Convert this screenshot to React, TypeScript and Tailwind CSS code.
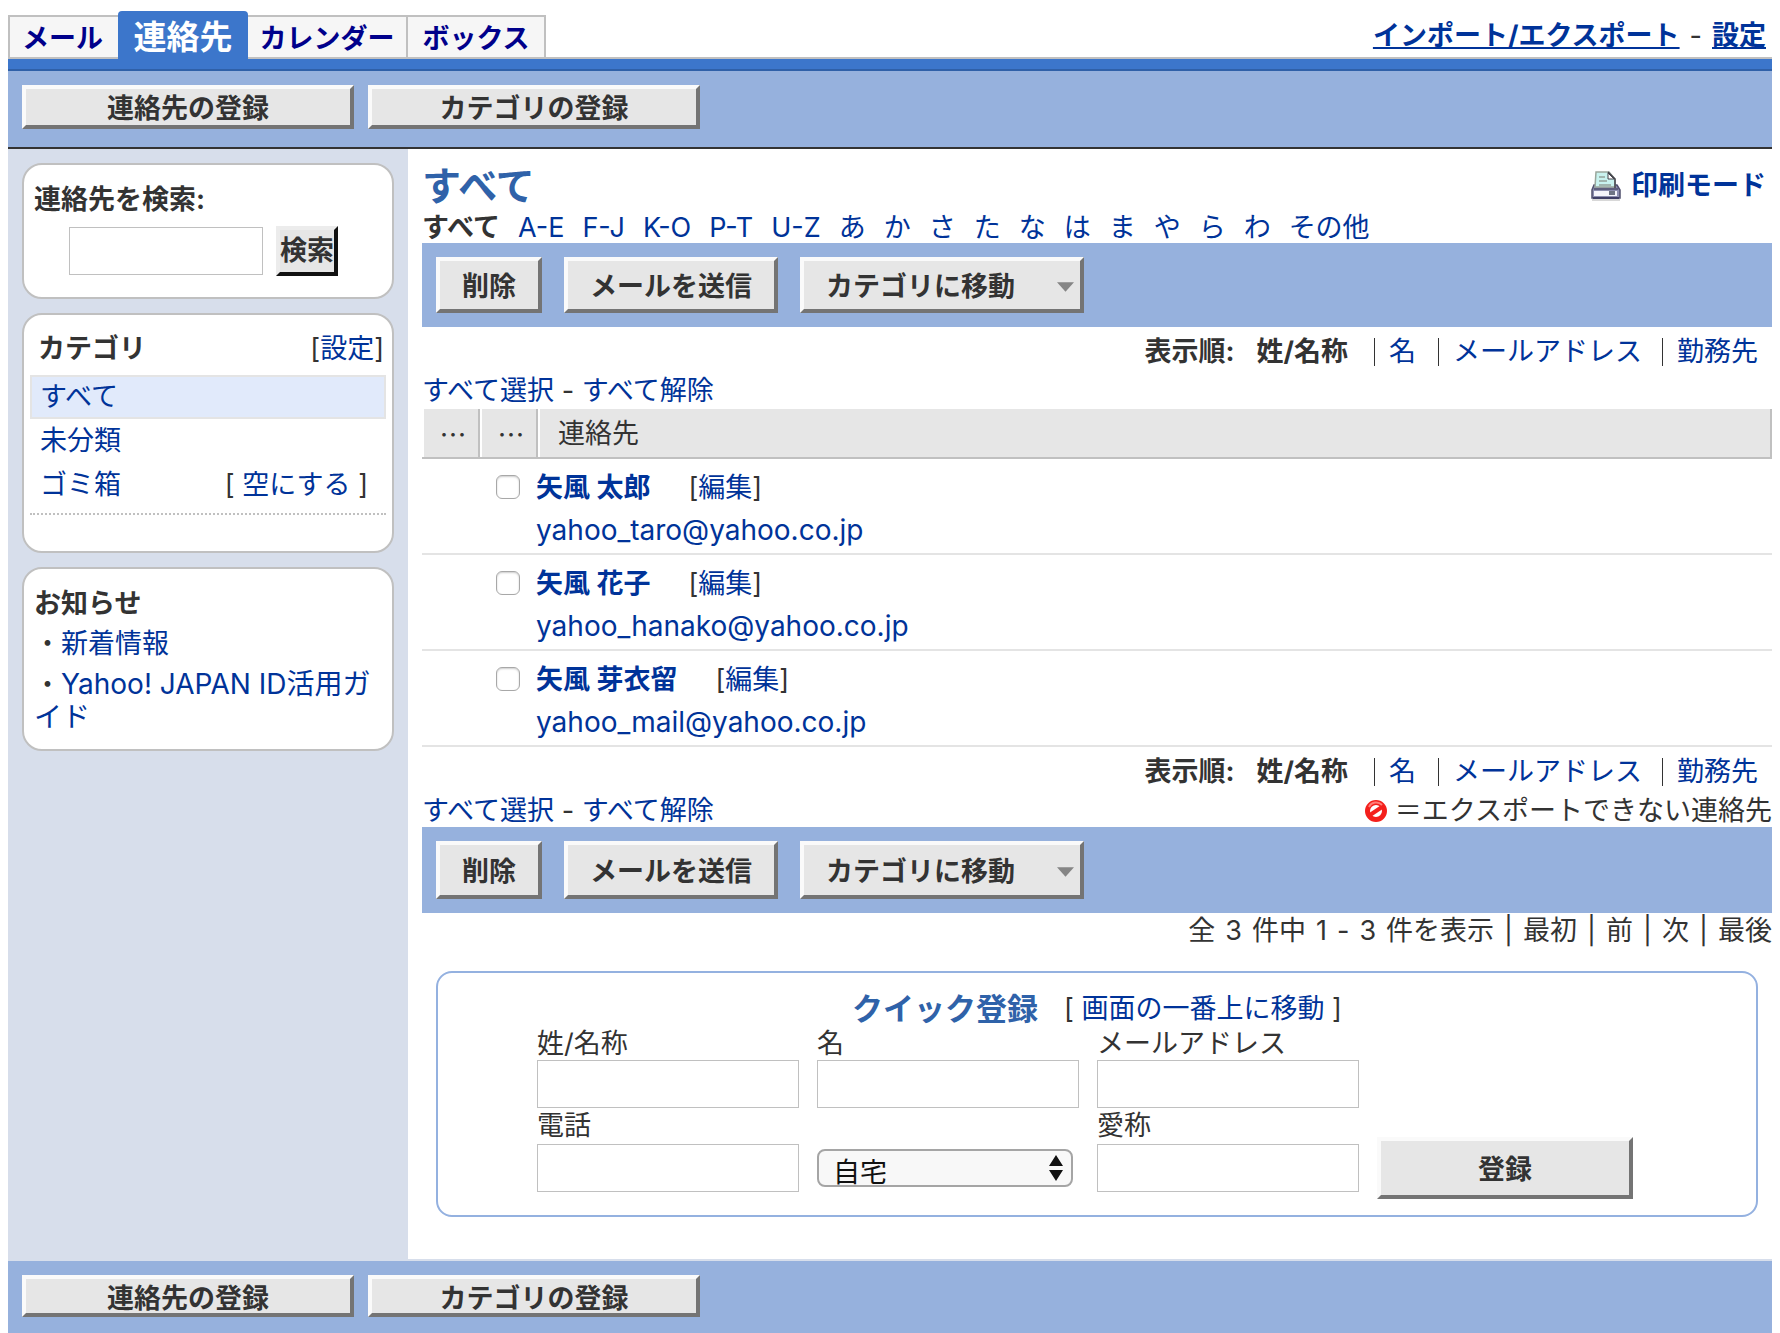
import clsx from 'clsx'

const RAISED =
    'border-4 border-t-[#fafafa] border-l-[#fafafa] border-r-[#747474] border-b-[#747474] bg-[#e6e6e6] pt-1 font-bold text-[#333] whitespace-nowrap'

const FIELD = 'h-12 border border-[#c0c0c0] bg-white px-2'

const LINK = 'text-[#003399]'

const indexLinks = ['A-E', 'F-J', 'K-O', 'P-T', 'U-Z', 'あ', 'か', 'さ', 'た', 'な', 'は', 'ま', 'や', 'ら', 'わ', 'その他']

const pager = ['全', '3', '件中', '1', '-', '3', '件を表示', '|', '最初', '|', '前', '|', '次', '|', '最後']

const contacts = [
    { name: '矢風 太郎', email: 'yahoo_taro@yahoo.co.jp' },
    { name: '矢風 花子', email: 'yahoo_hanako@yahoo.co.jp' },
    { name: '矢風 芽衣留', email: 'yahoo_mail@yahoo.co.jp' },
]

function PrinterIcon() {
    return (
        <svg width="30" height="30" viewBox="0 0 30 30" aria-hidden="true">
            <path d="M1 29h28" stroke="#d8d8d8" strokeWidth="2" />
            <path d="M3 14h23l3 5v8H1v-8z" fill="#8d8fb0" stroke="#50506e" strokeWidth="1.5" />
            <path d="M5 1h13l6 7v8H4z" fill="#c9f3ef" stroke="#9aa79c" strokeWidth="1.5" />
            <path d="M17 1l7 7v9" fill="none" stroke="#44444c" strokeWidth="1.5" />
            <path d="M17 2v6h6z" fill="#fff" stroke="#44444c" strokeWidth="1" />
            <path d="M8 6h6M8 10h8M8 14h12" stroke="#93a39a" strokeWidth="1.5" />
            <path d="M3 18h24" stroke="#50506e" strokeWidth="1.5" />
            <rect x="3" y="20" width="23" height="5" fill="#f4f4fb" />
            <rect x="18" y="20" width="6" height="4" fill="#6e7484" />
            <path d="M2 27h26" stroke="#3f3f66" strokeWidth="2" />
        </svg>
    )
}

function ForbiddenIcon() {
    return (
        <svg width="22" height="22" viewBox="0 0 22 22" aria-hidden="true">
            <circle cx="11" cy="11" r="8.5" fill="#fff" stroke="#f4201c" strokeWidth="5" />
            <path d="M5 15L17 7" stroke="#f4201c" strokeWidth="4" />
            <path d="M4 7a8 8 0 0 1 13 -2" fill="none" stroke="#ff7d78" strokeWidth="2" />
        </svg>
    )
}

function RegisterBar({ className, buttonClass }: { className: string; buttonClass: string }) {
    return (
        <div className={clsx('flex gap-3.5 bg-[#96b1dd] px-3.5 pt-3.5', className)}>
            <button className={clsx(RAISED, 'w-[332px]', buttonClass)}>連絡先の登録</button>
            <button className={clsx(RAISED, 'w-[332px]', buttonClass)}>カテゴリの登録</button>
        </div>
    )
}

function ActionBar({ buttonClass }: { buttonClass: string }) {
    return (
        <div className="flex gap-[22px] bg-[#96b1dd] p-3.5">
            <button className={clsx(RAISED, 'w-[106px]', buttonClass)}>削除</button>
            <button className={clsx(RAISED, 'w-[214px]', buttonClass)}>メールを送信</button>
            <button className={clsx(RAISED, 'flex w-[284px] items-center justify-between pr-1.5 pl-[22px]', buttonClass)}>
                カテゴリに移動
                <svg width="17" height="10" viewBox="0 0 18 10" aria-hidden="true">
                    <path d="M0 0h18L9 10z" fill="#858585" />
                </svg>
            </button>
        </div>
    )
}

function SortRow() {
    return (
        <div className="flex h-10 items-center justify-end pt-2.5 pr-3.5 leading-7">
            <span className="mr-[22px] font-bold">表示順:</span>
            <span className="mr-[26px] font-bold">姓/名称</span>
            <a href="#" className={clsx(LINK, 'mr-[22px] border-l border-[#333] pl-3.5')}>名</a>
            <a href="#" className={clsx(LINK, 'mr-5 border-l border-[#333] pl-3.5')}>メールアドレス</a>
            <a href="#" className={clsx(LINK, 'border-l border-[#333] pl-3.5')}>勤務先</a>
        </div>
    )
}

function SelectLinks() {
    return (
        <div>
            <a href="#" className={LINK}>すべて選択</a> - <a href="#" className={LINK}>すべて解除</a>
        </div>
    )
}

function Header() {
    const tab = 'flex items-center pt-1'
    return (
        <header>
            <div className="flex items-end justify-between">
                <nav className="flex h-[59px] items-end font-bold text-[#00008b]">
                    <a href="#" className={clsx(tab, 'h-11 w-[110px] border-2 border-r-0 border-[#c0c0c0] bg-[#f6f6f6] pl-3')}>メール</a>
                    <a href="#" className={clsx(tab, 'h-12 w-[130px] justify-center rounded-t-sm bg-[#3c76cb] text-[33px] text-white')}>連絡先</a>
                    <a href="#" className={clsx(tab, 'h-11 w-[158px] justify-center border-y-2 border-[#c0c0c0] bg-[#f6f6f6]')}>カレンダー</a>
                    <a href="#" className={clsx(tab, 'h-11 w-[140px] justify-center border-2 border-[#c0c0c0] bg-[#f6f6f6]')}>ボックス</a>
                </nav>
                <div className="flex h-12 grow items-start justify-end gap-2.5 border-b-2 border-[#c0c0c0] pr-1.5 leading-[50px]">
                    <a href="#" className={clsx(LINK, 'font-bold underline')}>インポート/エクスポート</a>
                    <span>-</span>
                    <a href="#" className={clsx(LINK, 'font-bold underline')}>設定</a>
                </div>
            </div>
            <div className="h-3 border-b-2 border-[#2f60a8] bg-[#3c76cb]" />
        </header>
    )
}

function Sidebar() {
    const card = 'rounded-[20px] border-2 border-[#c0c0c0] bg-white'
    return (
        <aside className="flex w-[400px] shrink-0 flex-col gap-3.5 bg-[#d7deeb] p-3.5">
            <form className={clsx(card, 'h-[136px] px-2.5 pt-[19px]')}>
                <label htmlFor="search" className="font-bold">連絡先を検索:</label>
                <div className="mt-2.5 flex items-center gap-[13px] pl-[35px]">
                    <input id="search" type="text" className={clsx(FIELD, 'w-[194px]')} />
                    <button type="button" className="h-[50px] w-[62px] border-4 border-t-[#ececec] border-r-[#111] border-b-[#111] border-l-[#ececec] bg-[#e6e6e6] font-bold whitespace-nowrap">検索</button>
                </div>
            </form>

            <section className={clsx(card, 'h-60 px-1.5 pt-[18px]')}>
                <div className="flex h-[42px] items-start justify-between pr-0.5 pl-2">
                    <h2 className="font-bold">カテゴリ</h2>
                    <span>[<a href="#" className={LINK}>設定</a>]</span>
                </div>
                <ul className="border-b-2 border-dotted border-[#c0c0c0] pb-1.5 leading-10">
                    <li className="border-2 border-[#e4e4e4] bg-[#e1eafb] px-2"><a href="#" className={LINK}>すべて</a></li>
                    <li className="px-2.5 leading-[44px]"><a href="#" className={LINK}>未分類</a></li>
                    <li className="flex justify-between pr-[18px] pl-2.5 leading-[44px]">
                        <a href="#" className={LINK}>ゴミ箱</a>
                        <span>[ <a href="#" className={LINK}>空にする</a> ]</span>
                    </li>
                </ul>
            </section>

            <section className={clsx(card, 'h-[184px] pt-[19px] pr-2 pl-2.5')}>
                <h2 className="font-bold">お知らせ</h2>
                <p className="pt-2">・<a href="#" className={LINK}>新着情報</a></p>
                <p className="pt-2">・<a href="#" className={clsx(LINK, 'text-[28px]')}>Yahoo! JAPAN ID活用ガイド</a></p>
            </section>
        </aside>
    )
}

function ContactTable() {
    const head = 'h-12 border-l-2 border-white bg-[#e6e6e6]'
    const dots = "pl-1 text-center font-['Noto_Sans_CJK_JP',sans-serif]"
    return (
        <table className="w-full table-fixed border-separate border-spacing-0">
            <thead className="text-left leading-[50px]">
                <tr>
                    <th className="w-[56px] border-b-2 border-[#c0c0c0] p-0 font-normal">
                        <div className={clsx(head, dots)}>…</div>
                    </th>
                    <th className="w-[58px] border-b-2 border-[#c0c0c0] p-0 font-normal">
                        <div className="border-l-2 border-[#c0c0c0]">
                            <div className={clsx(head, dots)}>…</div>
                        </div>
                    </th>
                    <th className="border-b-2 border-[#c0c0c0] p-0 font-normal">
                        <div className="border-x-2 border-[#c0c0c0]">
                            <div className={clsx(head, 'pl-[18px]')}>連絡先</div>
                        </div>
                    </th>
                </tr>
            </thead>
            <tbody>
                {contacts.map((contact) => (
                    <tr key={contact.email}>
                        <td className="border-b-2 border-[#e4e4e4]" />
                        <td className="border-b-2 border-[#e4e4e4] p-0 pt-4 pl-[18px] align-top">
                            <input
                                type="checkbox"
                                aria-label={contact.name}
                                className="block size-6 appearance-none rounded-md border border-[#a8a8a8] bg-white shadow-[inset_0_1px_2px_#ccc] checked:bg-[#3c76cb]"
                            />
                        </td>
                        <td className="h-24 border-b-2 border-[#e4e4e4] p-0 pt-[7px] align-top leading-[43px]">
                            <div className="flex gap-[38px]">
                                <a href="#" className={clsx(LINK, 'font-bold')}>{contact.name}</a>
                                <span>[<a href="#" className={LINK}>編集</a>]</span>
                            </div>
                            <a href="#" className={clsx(LINK, 'text-[28px]')}>{contact.email}</a>
                        </td>
                    </tr>
                ))}
            </tbody>
        </table>
    )
}

function QuickForm() {
    return (
        <form className="mx-3.5 mt-6 h-[246px] rounded-[16px] border-2 border-[#94b1e0] pt-5">
            <div className="flex items-center justify-center gap-[26px]">
                <h2 className="text-[31px] font-bold text-[#2f62a9]">クイック登録</h2>
                <span>[ <a href="#" className={LINK}>画面の一番上に移動</a> ]</span>
            </div>
            <div className="grid grid-cols-[262px_262px_262px_256px] gap-x-[18px] pt-[3px] pl-[99px]">
                <div className="flex flex-col">
                    <label htmlFor="last">姓/名称</label>
                    <input id="last" type="text" className={FIELD} />
                </div>
                <div className="flex flex-col">
                    <label htmlFor="first">名</label>
                    <input id="first" type="text" className={FIELD} />
                </div>
                <div className="flex flex-col">
                    <label htmlFor="email">メールアドレス</label>
                    <input id="email" type="text" className={FIELD} />
                </div>
            </div>
            <div className="grid grid-cols-[262px_262px_262px_256px] items-end gap-x-[18px] pt-0.5 pl-[99px]">
                <div className="flex flex-col gap-0.5">
                    <label htmlFor="tel">電話</label>
                    <input id="tel" type="text" className={FIELD} />
                </div>
                <div className="relative mb-[5px] w-64">
                    <select aria-label="電話の種類" className="block h-[38px] w-full appearance-none rounded-lg border-2 border-[#a5a5a5] bg-[#f8f8f8] pt-1.5 pl-3.5 leading-8 text-[#111]">
                        <option>自宅</option>
                        <option>勤務先</option>
                        <option>携帯</option>
                    </select>
                    <svg width="14" height="26" viewBox="0 0 14 26" className="pointer-events-none absolute top-1.5 right-2.5" aria-hidden="true">
                        <path d="M0 11L7 0l7 11zM0 15h14L7 26z" fill="#111" />
                    </svg>
                </div>
                <div className="flex flex-col gap-0.5">
                    <label htmlFor="nick">愛称</label>
                    <input id="nick" type="text" className={FIELD} />
                </div>
                <button type="button" className={clsx(RAISED, '-mb-[7px] h-[62px]')}>登録</button>
            </div>
        </form>
    )
}

function App() {
    return (
        <div className="bg-white px-2 font-['Inter','Noto_Sans_CJK_JP',sans-serif] text-[27px] leading-8 text-[#333]">
            <Header />
            <RegisterBar className="h-[78px] border-b-2 border-[#333]" buttonClass="h-11" />
            <div className="flex">
                <Sidebar />
                <main className="min-w-0 grow border-b-2 border-[#d7deeb] pb-[42px] pl-3.5">
                    <div className="flex h-[62px] items-center justify-between pt-3 pr-1.5">
                        <h1 className="text-[39px] font-bold text-[#2f62a9]">すべて</h1>
                        <a href="#" className={clsx(LINK, 'flex items-center gap-2.5 font-bold')}>
                            <PrinterIcon />
                            印刷モード
                        </a>
                    </div>
                    <div className="flex h-8 gap-[18px] leading-[34px] whitespace-nowrap">
                        <span className="font-bold">すべて</span>
                        {indexLinks.map((label) => (
                            <a key={label} href="#" className={LINK}>{label}</a>
                        ))}
                    </div>
                    <ActionBar buttonClass="h-14" />
                    <SortRow />
                    <div className="h-[42px] pt-2">
                        <SelectLinks />
                    </div>
                    <ContactTable />
                    <SortRow />
                    <div className="flex h-10 justify-between pt-2">
                        <SelectLinks />
                        <span className="flex items-center gap-2">
                            <ForbiddenIcon />
                            ＝エクスポートできない連絡先
                        </span>
                    </div>
                    <ActionBar buttonClass="h-[58px]" />
                    <p className="flex h-[34px] items-end justify-end gap-2.5">
                        {pager.map((part, i) => (
                            <span key={i}>{part}</span>
                        ))}
                    </p>
                    <QuickForm />
                </main>
            </div>
            <RegisterBar className="h-[72px]" buttonClass="h-[42px]" />
        </div>
    )
}

export default App
